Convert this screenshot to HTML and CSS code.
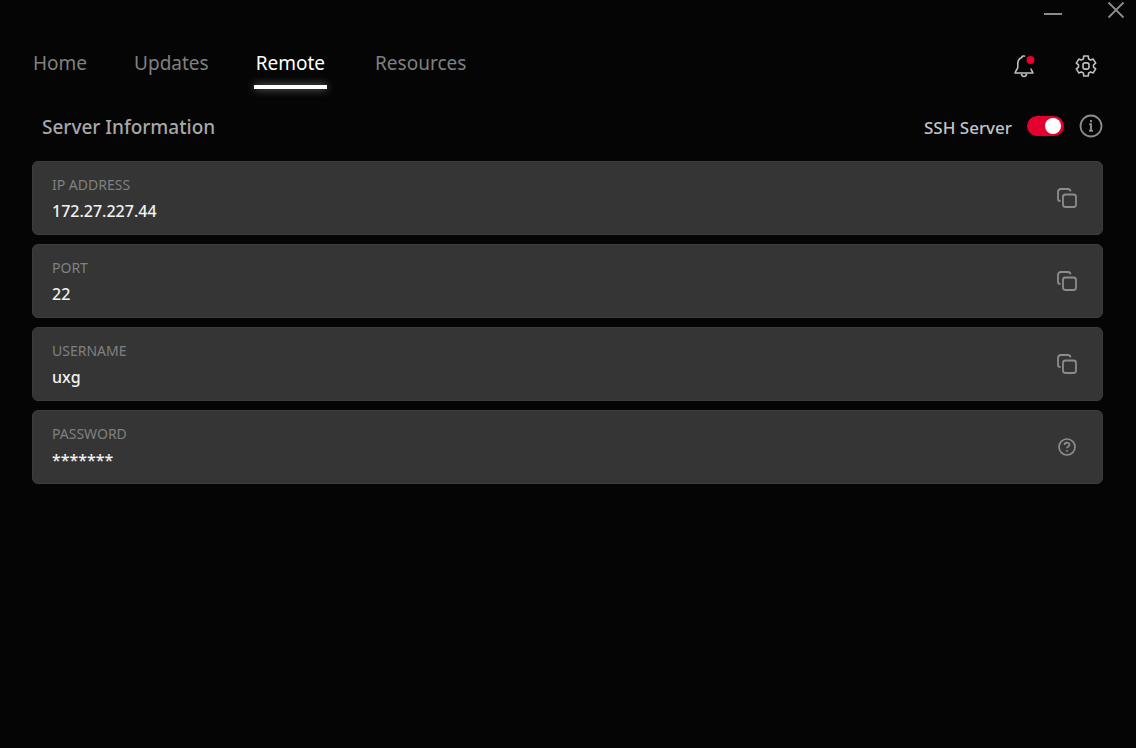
FILE: index.html
```html
<!DOCTYPE html>
<html lang="en">
  <head>
    <meta charset="UTF-8" />
    <meta name="viewport" content="width=device-width, initial-scale=1.0" />
    <title>Remote</title>
    <link rel="stylesheet" href="styles.css">
  </head>
  <body>
    <div class="titlebar">
      <button class="icon-btn" type="button" aria-label="Minimize">
        <svg width="20" height="20" viewBox="0 0 20 20">
          <path d="M1 14h18" stroke-width="2" />
        </svg>
      </button>
      <button class="icon-btn" type="button" aria-label="Close">
        <svg width="20" height="20" viewBox="0 0 20 20">
          <path d="M2.500 2.500l15 15M17.500 2.500l-15 15" stroke-width="1.800" />
        </svg>
      </button>
    </div>

    <header>
      <nav>
        <a href="#home">Home</a>
        <a href="#updates">Updates</a>
        <a href="#remote" class="active" aria-current="page">Remote</a>
        <a href="#resources">Resources</a>
      </nav>
      <div class="header-actions">
        <button class="icon-btn" type="button" aria-label="Notifications">
          <svg width="24" height="24" viewBox="0 0 24 24" stroke-width="1.600">
            <path d="M13 2.200C10.500 1.400 9.800 2.800 9.800 3.400C6.800 4.500 5.800 6.800 5.800 9.500v3.500c0 2-2.300 3.500-2.600 6h17.600c0-1.500-1.600-2.500-1.900-4.500" />
            <path d="M9.500 19.500c0 4 5 4 5 0" />
            <circle class="dot" cx="18.500" cy="6" r="4" />
          </svg>
        </button>
        <button class="icon-btn" type="button" aria-label="Settings">
          <svg width="24" height="24" viewBox="0 0 24 24" stroke-width="1.600" stroke-linejoin="round">
            <path d="M9.800 2h4.400l.5 3 2 1.100 2.500-1 2.500 4-2.200 1.700v2.400l2.200 1.700-2.500 4-2.500-1-2 1.100-.5 3H9.800l-.5-3-2-1.100-2.500 1-2.500-4 2.200-1.700v-2.400L2.300 9.100l2.500-4 2.500 1 2-1.100z" />
            <rect x="9" y="8.900" width="6" height="6.200" rx="2" />
          </svg>
        </button>
      </div>
    </header>

    <main>
      <div class="section-head">
        <h1>Server Information</h1>
        <div class="ssh">
          <label for="ssh-server">SSH Server</label>
          <input type="checkbox" class="switch" id="ssh-server" checked />
          <button class="icon-btn" type="button" aria-label="About the SSH server">
            <svg width="24" height="24" viewBox="0 0 24 24">
              <circle cx="12" cy="12" r="10.500" stroke-width="1.800" />
              <path d="M10.200 10.300H12v6.200M10 16.700h4M12 6v2.200" stroke-width="2" />
            </svg>
          </button>
        </div>
      </div>

      <dl class="cards">
        <div class="card">
          <dt>IP ADDRESS</dt>
          <dd>172.27.227.44</dd>
          <button class="icon-btn" type="button" aria-label="Copy IP address">
            <svg width="22" height="22" viewBox="0 0 22 22" stroke-width="1.800">
              <path d="M4.500 14C2.500 14 2 13.300 2 12V5c0-2 .8-3 3-3h7c1.500 0 2.300.6 2.500 2.300" />
              <rect x="7" y="7.500" width="13" height="12.500" rx="2.500" />
            </svg>
          </button>
        </div>
        <div class="card">
          <dt>PORT</dt>
          <dd>22</dd>
          <button class="icon-btn" type="button" aria-label="Copy port">
            <svg width="22" height="22" viewBox="0 0 22 22" stroke-width="1.800">
              <path d="M4.500 14C2.500 14 2 13.300 2 12V5c0-2 .8-3 3-3h7c1.500 0 2.300.6 2.500 2.300" />
              <rect x="7" y="7.500" width="13" height="12.500" rx="2.500" />
            </svg>
          </button>
        </div>
        <div class="card">
          <dt>USERNAME</dt>
          <dd>uxg</dd>
          <button class="icon-btn" type="button" aria-label="Copy username">
            <svg width="22" height="22" viewBox="0 0 22 22" stroke-width="1.800">
              <path d="M4.500 14C2.500 14 2 13.300 2 12V5c0-2 .8-3 3-3h7c1.500 0 2.300.6 2.500 2.300" />
              <rect x="7" y="7.500" width="13" height="12.500" rx="2.500" />
            </svg>
          </button>
        </div>
        <div class="card">
          <dt>PASSWORD</dt>
          <dd>*******</dd>
          <button class="icon-btn" type="button" aria-label="Password help">
            <svg width="22" height="22" viewBox="0 0 22 22" stroke-width="1.700">
              <circle cx="11" cy="11" r="8" />
              <path d="M8.500 9c0-3.200 5-3.200 5-.3 0 1.800-2.500 1.900-2.500 3.500M11 14v1.700" />
            </svg>
          </button>
        </div>
      </dl>
    </main>
  </body>
</html>
```
FILE: styles.css
```css
* {
  box-sizing: border-box;
}
body {
  font-family: "Segoe UI", "Noto Sans", sans-serif;
  margin: 0;
  background-color: #050505;
  color: #c4c4c4;
}
.icon-btn {
  display: flex;
  padding: 0;
  border: none;
  background: none;
  color: #8c8c8c;
  cursor: pointer;
}
svg {
  fill: none;
  stroke: currentColor;
}
.titlebar {
  display: flex;
  justify-content: flex-end;
  gap: 43px;
  padding-right: 10px;
}
header {
  display: flex;
  justify-content: space-between;
  align-items: flex-start;
  padding: 28px 38px 0 33px;
}
nav {
  display: flex;
  gap: 47px;
}
nav a {
  color: #808080;
  font-size: 19px;
  line-height: 30px;
  padding-bottom: 7px;
  text-decoration: none;
}
nav .active {
  color: #fff;
  padding: 0 2px 7px;
  margin: 0 1px 0 -2px;
  position: relative;
}
nav .active::after {
  content: "";
  position: absolute;
  left: 0;
  right: 0;
  bottom: -4px;
  height: 4px;
  background-color: #fff;
  box-shadow: 0 0 8px rgba(255, 255, 255, 0.5);
}
.header-actions {
  display: flex;
  gap: 38px;
  padding-top: 6px;
}
.header-actions .icon-btn {
  color: #c0c0c0;
}
.dot {
  fill: #e4002f;
  stroke: none;
}
main {
  padding: 28px 33px 32px 32px;
}
.section-head {
  display: flex;
  justify-content: space-between;
  padding: 1px 0 0 10px;
}
h1 {
  color: #a8a8a8;
  font-size: 19px;
  font-weight: 500;
  line-height: 26px;
  margin: 0;
}
.ssh {
  display: flex;
  align-items: flex-start;
  font-size: 17px;
  font-weight: 500;
  line-height: 28px;
}
.switch {
  appearance: none;
  display: flex;
  justify-content: flex-end;
  align-items: center;
  width: 37px;
  height: 20px;
  margin: 2px 15px 0;
  padding: 0 3px;
  border-radius: 10px;
  background-color: #555;
  cursor: pointer;
}
.switch::before {
  content: "";
  width: 16px;
  height: 16px;
  border-radius: 50%;
  background-color: #fff;
}
.switch:checked {
  background-color: #e4002f;
}
.switch:not(:checked) {
  justify-content: flex-start;
}
.cards {
  display: grid;
  gap: 9px;
  margin: 19px 0 0;
}
.card {
  display: grid;
  grid-template-columns: 1fr auto;
  align-items: center;
  padding: 10px 24px 10px 19px;
  background-color: #353535;
  border: 1px solid #3d3d3d;
  border-radius: 6px;
}
.card dt {
  color: #808080;
  font-size: 14px;
  line-height: 26px;
}
.card dd {
  grid-row: 2;
  margin: 0;
  color: #f2f2f2;
  font-size: 16px;
  font-weight: 500;
  line-height: 26px;
}
.card .icon-btn {
  grid-row: 1 / 3;
  grid-column: 2;
}
```
